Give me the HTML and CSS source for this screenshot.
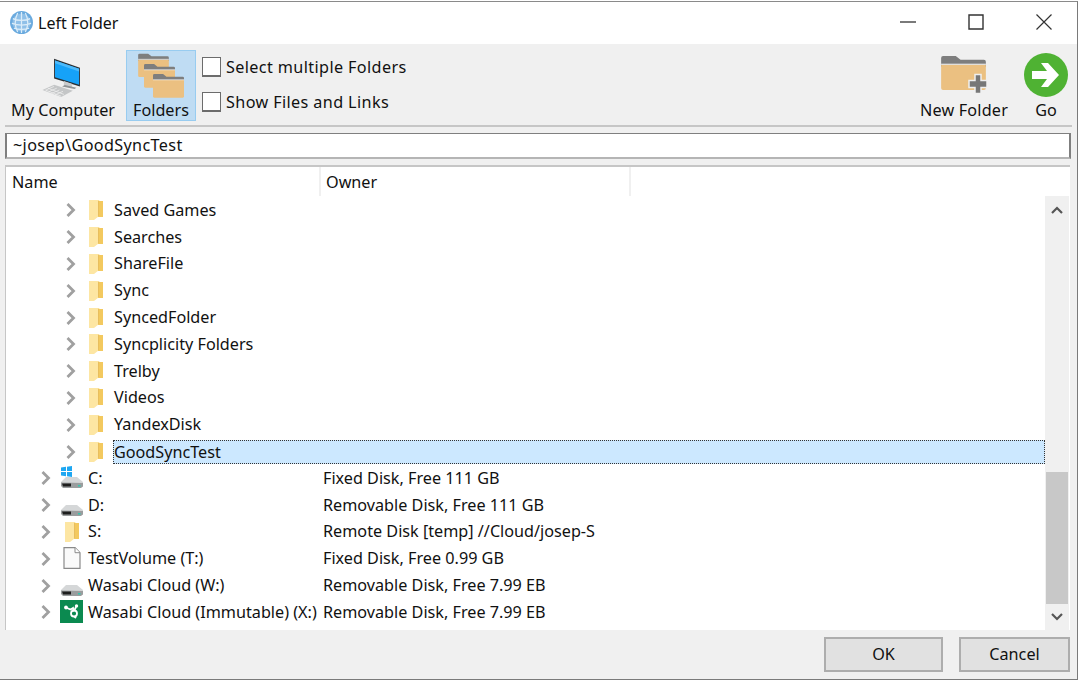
FILE: index.html
```html
<!DOCTYPE html>
<html lang="en">
<head>
<meta charset="utf-8">
<title>Left Folder</title>
<link rel="stylesheet" href="styles.css">
</head>
<body>
<svg class="defs" width="0" height="0" aria-hidden="true">
  <symbol id="chev" viewBox="0 0 12 16"><path d="M2.500 2l6 6-6 6" fill="none" stroke="#a0a0a0" stroke-width="2.800"/></symbol>
  <symbol id="folder" viewBox="0 0 16 22">
    <path d="M1 1h9l5 2.500v14.500H6l-2.500 3L1 20z" fill="#f8d26f"/>
    <path d="M10 2h5v16h-5z" fill="#f3c95f"/>
    <path d="M1 1h9.500v16.500L6 21H1z" fill="#fde6a3"/>
    <path d="M10.500 2v15.500" stroke="#e3b755" stroke-width=".8"/>
  </symbol>
  <symbol id="drive" viewBox="0 0 24 14">
    <path d="M6 2h11l6 5v3H1V7z" fill="#d5d7d8"/>
    <path d="M1 7.500l22 .5v3.500l-2 1.500H3l-2-2z" fill="#9a9d9e"/>
    <path d="M2 8.500h9v3H3z" fill="#1e1e1e"/>
    <path d="M18 10h2.500v1.500H18z" fill="#35c6b0"/>
  </symbol>
  <symbol id="doc" viewBox="0 0 18 22">
    <path d="M1 .7h11l5 5v15.600H1z" fill="#fafafa" stroke="#8a8a8a" stroke-width="1.200"/>
    <path d="M12 .7v5h5" fill="#fff" stroke="#8a8a8a" stroke-width="1"/>
  </symbol>
  <symbol id="wasabi" viewBox="0 0 23 23">
    <path d="M0 0h23v23H0z" fill="#0b8a50"/>
    <path d="M7 8l3.500 1.500L13 8l.5 3.500" fill="none" stroke="#fff" stroke-width="1.800"/>
    <circle cx="14" cy="13.500" r="3" fill="none" stroke="#fff" stroke-width="1.800"/>
    <path d="M16 7l-1.500 3M14.500 16.500l1.500 1.500" fill="none" stroke="#fff" stroke-width="1.800"/>
    <circle cx="6" cy="7.500" r="1.900" fill="#fff"/>
    <circle cx="16.500" cy="6" r="1.700" fill="#fff"/>
  </symbol>
  <symbol id="plainfolder" viewBox="0 0 46 36">
    <path d="M0 3a2 2 0 0 1 2-2h13l5 4h24a2 2 0 0 1 2 2v5H0z" fill="#7e7e7e"/>
    <path d="M0 10h46v24a2 2 0 0 1-2 2H2a2 2 0 0 1-2-2z" fill="#ebc081"/>
    <path d="M0 9.500h46" stroke="#fff" stroke-width="1"/>
  </symbol>
</svg>

<div class="window">
  <header class="titlebar">
    <svg class="appicon" viewBox="0 0 24 24" width="23" height="23" aria-hidden="true">
      <circle cx="12" cy="12" r="12" fill="#6aaade"/>
      <circle cx="12" cy="12" r="9.500" fill="#8fc0e8"/>
      <path d="M3 8c5 2.500 13 2.500 18 0M2 13c6 2 14 2 20 0M4 18c5 1.500 11 1.500 16 0M8 2c-3 6-3 14 0 20M16 2c3 6 3 14 0 20M12 1v22" fill="none" stroke="#dcedf9" stroke-width="1.300"/>
    </svg>
    <span class="title">Left Folder</span>
    <div class="winctrls">
      <svg class="winbtn" viewBox="0 0 16 16" width="16" height="16" aria-hidden="true"><path d="M0 8h16" stroke="#222" stroke-width="1.200"/></svg>
      <svg class="winbtn" viewBox="0 0 16 16" width="16" height="16" aria-hidden="true"><path d="M1 1h14v14H1z" fill="none" stroke="#333" stroke-width="1.400"/></svg>
      <svg class="winbtn" viewBox="0 0 16 16" width="16" height="16" aria-hidden="true"><path d="M.5.500l15 15M15.500.500l-15 15" stroke="#333" stroke-width="1.200"/></svg>
    </div>
  </header>

  <section class="toolbar">
    <div class="tool tool-computer">
      <svg class="tool-icon" viewBox="0 0 46 46" width="42" height="41" aria-hidden="true">
        <path d="M13 2l29 10v21L13 24z" fill="#2b2f33"/>
        <path d="M14 4l27 9.300v17.700L14 22.700z" fill="#16a2f8"/>
        <path d="M14 4l27 9.300v3L14 7z" fill="#4dbafa"/>
        <path d="M24 27l9 3v5l-9-3z" fill="#c9cbcc"/>
        <path d="M22 33l14 3 2-1.500-13-3z" fill="#8f9395"/>
        <path d="M0 37l13-6 21 7-13 7z" fill="#c4c6c7"/>
        <path d="M4 37l9-4M7 39l9-4M10 41l9-4M14 42.500l9-4M6 35l18 7M3 37l18 7" stroke="#f2f2f2" stroke-width=".8"/>
      </svg>
      <span class="tool-label">My Computer</span>
    </div>
    <div class="tool tool-folders">
      <svg class="tool-icon" viewBox="0 0 48 45" width="48" height="45" aria-hidden="true">
        <use href="#plainfolder" x="0" y="0" width="31" height="24"/>
        <use href="#plainfolder" x="6" y="10" width="31" height="25"/>
        <use href="#plainfolder" x="15" y="20" width="31" height="25"/>
      </svg>
      <span class="tool-label">Folders</span>
    </div>
    <div class="options">
      <label class="option"><span class="checkbox"></span>Select multiple Folders</label>
      <label class="option"><span class="checkbox"></span>Show Files and Links</label>
    </div>
    <div class="tool tool-new">
      <svg class="tool-icon" viewBox="0 0 48 42" width="48" height="42" aria-hidden="true">
        <use href="#plainfolder" x="0" y="1" width="47" height="35"/>
        <path d="M30 27h6v-6h6v6h6v7h-6v6h-6v-6h-6z" fill="#777" stroke="#efefef" stroke-width="1.500" transform="translate(-1 -.5)"/>
      </svg>
      <span class="tool-label tool-label-wide">New Folder</span>
    </div>
    <div class="tool tool-go">
      <svg class="tool-icon" viewBox="0 0 44 44" width="44" height="44" aria-hidden="true">
        <circle cx="22" cy="22" r="22" fill="#4fb233"/>
        <path d="M8 18h15l-6-8h7l11 12-11 12h-7l6-8H8z" fill="#fff"/>
      </svg>
      <span class="tool-label">Go</span>
    </div>
  </section>

  <div class="pathbar"><div class="pathinput">~josep\GoodSyncTest</div></div>

  <section class="list">
    <div class="listhead">
      <div class="col col-name">Name</div>
      <div class="col col-owner">Owner</div>
    </div>
    <div class="listbody">
      <div class="rows">
        <div class="row lvl2"><svg class="chev"><use href="#chev"/></svg><svg class="ico-folder"><use href="#folder"/></svg><span class="name">Saved Games</span></div>
        <div class="row lvl2"><svg class="chev"><use href="#chev"/></svg><svg class="ico-folder"><use href="#folder"/></svg><span class="name">Searches</span></div>
        <div class="row lvl2"><svg class="chev"><use href="#chev"/></svg><svg class="ico-folder"><use href="#folder"/></svg><span class="name">ShareFile</span></div>
        <div class="row lvl2"><svg class="chev"><use href="#chev"/></svg><svg class="ico-folder"><use href="#folder"/></svg><span class="name">Sync</span></div>
        <div class="row lvl2"><svg class="chev"><use href="#chev"/></svg><svg class="ico-folder"><use href="#folder"/></svg><span class="name">SyncedFolder</span></div>
        <div class="row lvl2"><svg class="chev"><use href="#chev"/></svg><svg class="ico-folder"><use href="#folder"/></svg><span class="name">Syncplicity Folders</span></div>
        <div class="row lvl2"><svg class="chev"><use href="#chev"/></svg><svg class="ico-folder"><use href="#folder"/></svg><span class="name">Trelby</span></div>
        <div class="row lvl2"><svg class="chev"><use href="#chev"/></svg><svg class="ico-folder"><use href="#folder"/></svg><span class="name">Videos</span></div>
        <div class="row lvl2"><svg class="chev"><use href="#chev"/></svg><svg class="ico-folder"><use href="#folder"/></svg><span class="name">YandexDisk</span></div>
        <div class="row lvl2"><svg class="chev"><use href="#chev"/></svg><svg class="ico-folder"><use href="#folder"/></svg><span class="name selected">GoodSyncTest</span></div>
        <div class="row lvl1"><svg class="chev"><use href="#chev"/></svg><span class="ico-box ico-c"><svg class="winlogo" viewBox="0 0 11 11"><path d="M0 1.500l5-.7V5H0zM6 .7L11 0v5H6zM0 6h5v4.200l-5-.7zM6 6h5v5l-5-.7z" fill="#1ea7f2"/></svg><svg class="ico-drive"><use href="#drive"/></svg></span><span class="name">C:</span><span class="owner">Fixed Disk, Free 111 GB</span></div>
        <div class="row lvl1"><svg class="chev"><use href="#chev"/></svg><span class="ico-box ico-d"><svg class="ico-drive"><use href="#drive"/></svg></span><span class="name">D:</span><span class="owner">Removable Disk, Free 111 GB</span></div>
        <div class="row lvl1"><svg class="chev"><use href="#chev"/></svg><span class="ico-box ico-center"><svg class="ico-folder"><use href="#folder"/></svg></span><span class="name">S:</span><span class="owner">Remote Disk [temp] //Cloud/josep-S</span></div>
        <div class="row lvl1"><svg class="chev"><use href="#chev"/></svg><span class="ico-box ico-center"><svg class="ico-doc"><use href="#doc"/></svg></span><span class="name">TestVolume (T:)</span><span class="owner">Fixed Disk, Free 0.99 GB</span></div>
        <div class="row lvl1"><svg class="chev"><use href="#chev"/></svg><span class="ico-box ico-d"><svg class="ico-drive"><use href="#drive"/></svg></span><span class="name">Wasabi Cloud (W:)</span><span class="owner">Removable Disk, Free 7.99 EB</span></div>
        <div class="row lvl1"><svg class="chev"><use href="#chev"/></svg><span class="ico-box ico-center"><svg class="ico-wasabi"><use href="#wasabi"/></svg></span><span class="name">Wasabi Cloud (Immutable) (X:)</span><span class="owner">Removable Disk, Free 7.99 EB</span></div>
      </div>
      <div class="scrollbar">
        <svg class="sb-arrow sb-up" viewBox="0 0 12 8" width="12" height="8" aria-hidden="true"><path d="M1 7l5-5 5 5" fill="none" stroke="#555" stroke-width="2.200"/></svg>
        <div class="sb-track"><div class="sb-thumb"></div></div>
        <svg class="sb-arrow sb-down" viewBox="0 0 12 8" width="12" height="8" aria-hidden="true"><path d="M1 1l5 5 5-5" fill="none" stroke="#555" stroke-width="2.200"/></svg>
      </div>
    </div>
  </section>

  <footer class="actions">
    <button class="btn btn-ok">OK</button>
    <button class="btn btn-cancel">Cancel</button>
  </footer>
</div>
</body>
</html>
```

FILE: styles.css
```css
* { box-sizing: border-box; }
html, body { margin: 0; padding: 0; background: #fff; }
body { width: 1080px; height: 681px; overflow: hidden; font-family: "Noto Sans", "Open Sans", sans-serif; font-size: 16.200px; color: #111; }
.defs { position: absolute; }
.window { width: 1078px; height: 679px; margin-top: 1px; border-top: 1px solid #8a8a8a; border-right: 1px solid #7a7a7a; border-bottom: 1px solid #7a7a7a; background: #f0f0f0; display: flex; flex-direction: column; }

.titlebar { height: 42px; flex: none; background: #fff; display: flex; align-items: center; padding-left: 10px; }
.appicon { flex: none; margin-top: -2px; }
.title { margin-left: 5px; font-size: 16px; }
.winctrls { margin-left: auto; display: flex; align-items: center; gap: 52px; padding-right: 25px; margin-top: -2px; }
.winbtn { display: block; flex: none; }

.toolbar { height: 83px; flex: none; margin: 0 5px 0 5px; border-bottom: 2px solid #c6c6c6; display: flex; position: relative; padding-top: 6px; }
.tool { display: flex; flex-direction: column; align-items: center; height: 71px; flex: none; }
.tool-icon { display: block; flex: none; }
.tool-label { margin-top: auto; line-height: 20px; padding-bottom: 1px; white-space: nowrap; }
.tool-label-wide { letter-spacing: .2px; }
.tool-computer { width: 116px; padding-top: 7px; }
.tool-folders { width: 70px; margin-left: 5px; background: #bfdcf3; border: 1px solid #98ccf0; padding-top: 2px; }
.tool-folders .tool-icon { margin-left: 2px; }
.tool-folders .tool-label { padding-bottom: 0; }
.options { margin-left: 6px; display: flex; flex-direction: column; gap: 15px; padding-top: 7px; }
.option { display: flex; align-items: center; gap: 5px; height: 20px; white-space: nowrap; letter-spacing: .38px; }
.checkbox { width: 19px; height: 20px; background: #fff; border: 1px solid #6c6c6c; border-bottom-width: 2px; flex: none; }
.tool-new { width: 100px; margin-left: auto; padding-top: 4px; }
.tool-go { width: 50px; margin-left: 7px; margin-right: 1px; padding-top: 3px; }

.pathbar { flex: none; padding: 6px 6px 6px 5px; }
.pathinput { height: 26px; background: #fff; border: 2px solid #7f7f7f; border-top-width: 1px; border-bottom-color: #b5b5b5; padding-left: 6px; line-height: 22px; letter-spacing: .35px; }

.list { flex: 1; min-height: 0; margin-left: 5px; margin-right: 7px; border-top: 2px solid #c6c6c6; border-left: 1px solid #c6c6c6; background: #fff; display: flex; flex-direction: column; }
.listhead { height: 29px; flex: none; display: flex; align-items: center; }
.col { height: 100%; display: flex; align-items: center; border-right: 2px solid #f0f0f0; padding-left: 6px; }
.col-name { width: 315px; }
.col-owner { width: 310px; padding-left: 5px; }
.listbody { flex: 1; min-height: 0; display: flex; }
.rows { flex: 1; min-width: 0; padding-top: .5px; }
.row { height: 26.800px; display: flex; align-items: center; position: relative; }
.chev { width: 12px; height: 16px; flex: none; margin-top: 1px; }
.lvl2 .chev { margin-left: 59px; }
.lvl1 .chev { margin-left: 34px; }
.ico-folder { width: 16px; height: 22px; flex: none; display: block; margin-top: 1px; }
.lvl2 .ico-folder { margin-left: 11px; }
.name { white-space: nowrap; }
.lvl2 .name { margin-left: 9px; padding: 0 1px; }
.lvl2 .selected { flex: 1; height: 24px; line-height: 22px; margin-top: 1px; padding: 0; background: #cce8ff; border: 1px dotted #333; }
.lvl1 .name { margin-left: 4px; width: 235px; flex: none; }
.owner { white-space: nowrap; position: absolute; left: 317px; }
.ico-box { width: 24px; height: 24px; margin-left: 8px; flex: none; position: relative; display: flex; }
.ico-center { align-items: center; justify-content: center; }
.ico-d { align-items: flex-end; }
.ico-c { align-items: flex-end; padding-bottom: 1px; }
.ico-drive { width: 24px; height: 14px; display: block; }
.winlogo { width: 11px; height: 11px; position: absolute; left: 1px; top: 0; }
.ico-doc { width: 18px; height: 22px; display: block; }
.ico-wasabi { width: 23px; height: 23px; display: block; margin-left: -1px; }

.scrollbar { width: 24px; flex: none; background: #f0f0f0; display: flex; flex-direction: column; align-items: center; margin-right: 1px; }
.sb-arrow { display: block; flex: none; }
.sb-up { margin: 10px 0 9px; }
.sb-down { margin: 9px 0; }
.sb-track { flex: 1; width: 100%; display: flex; flex-direction: column; justify-content: flex-end; }
.sb-thumb { height: 132px; background: #c8c8c8; margin: 0 1px; }

.actions { height: 49px; flex: none; display: flex; justify-content: flex-end; align-items: flex-start; gap: 16px; padding: 7px 7px 0 0; }
.btn { height: 35px; background: #e1e1e1; border: 2px solid #adadad; font: inherit; color: #111; padding: 0 0 2px; }
.btn-ok { width: 119px; }
.btn-cancel { width: 111px; }
```
